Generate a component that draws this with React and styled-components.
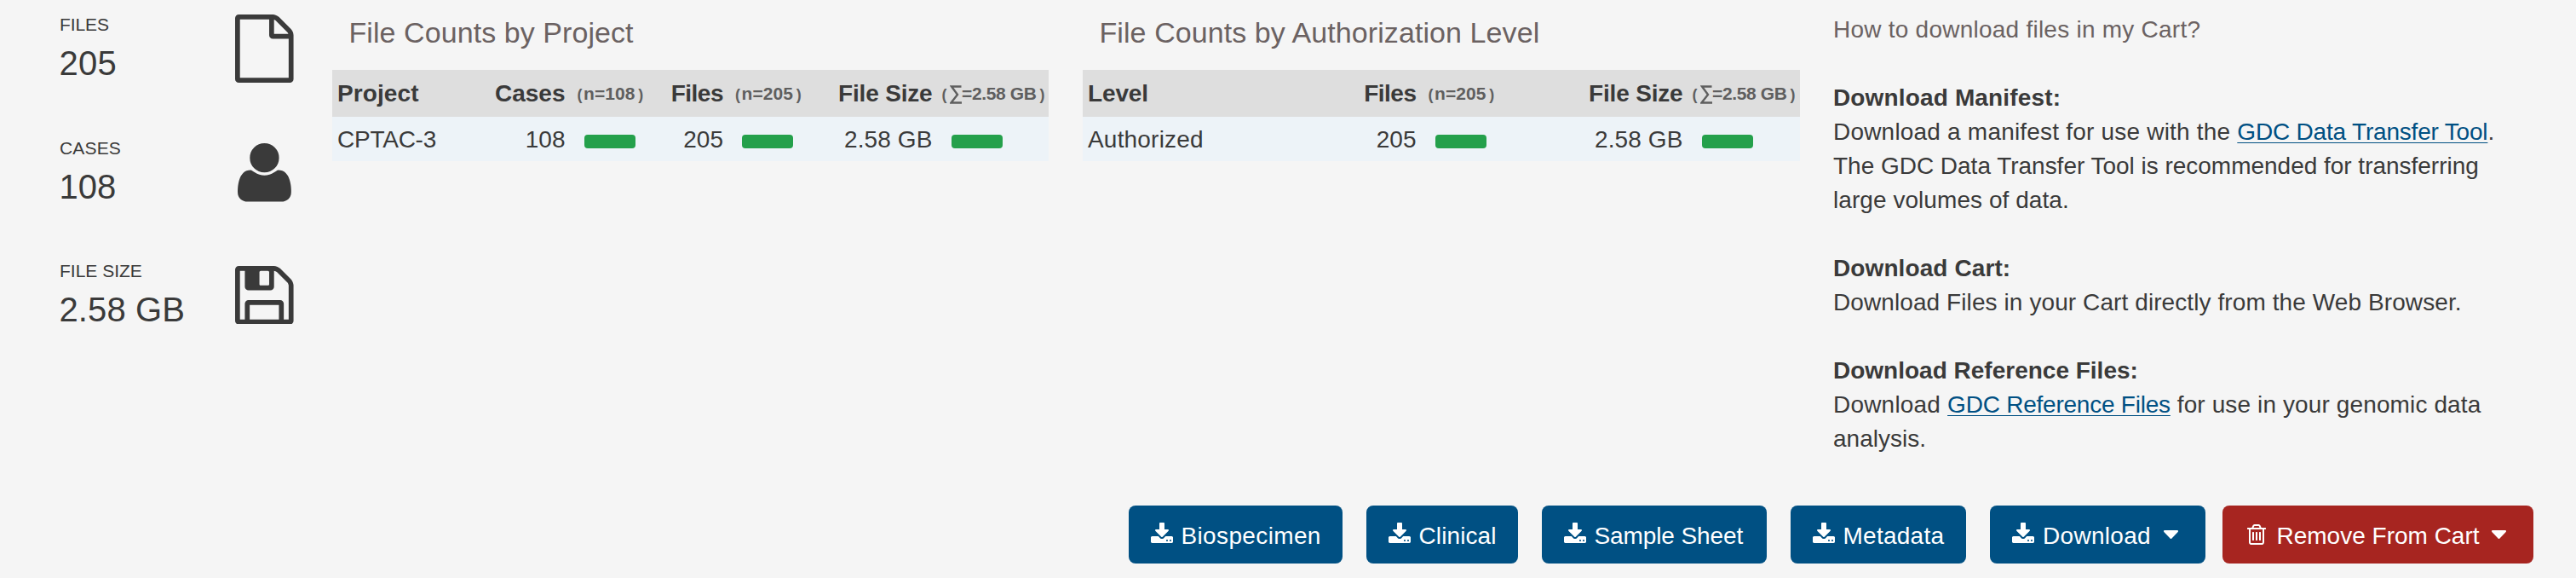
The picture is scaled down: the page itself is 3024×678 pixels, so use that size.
import React from 'react';
import styled, { createGlobalStyle } from 'styled-components';

const GlobalStyle = createGlobalStyle`
  * { box-sizing: border-box; }
  body {
    margin: 0;
    background: #f5f5f5;
    color: #3a3a3a;
    font-family: "Liberation Sans", Arial, sans-serif;
    font-size: 28px;
    line-height: 40px;
  }
`;

const Page = styled.main`
  display: flex;
  flex-direction: column;
  justify-content: space-between;
  height: 678px;
  overflow: hidden;
  background: #f5f5f5;
`;

const Summary = styled.section`
  display: flex;
  align-items: flex-start;
`;

const Text = styled.span`
  letter-spacing: ${(p) => p.$ls || 0}px;
  white-space: nowrap;
`;

/* ---- totals ---- */
const Stats = styled.div`
  display: flex;
  flex-direction: column;
  width: 390px;
  padding: 14px 45px 0 69.5px;
`;

const Stat = styled.div`
  display: flex;
  justify-content: space-between;
  height: 144.5px;
`;

const StatLabel = styled.div`
  font-size: 21px;
  line-height: 30px;
  padding-left: 0.5px;
`;

const StatValue = styled.div`
  font-size: 40px;
  line-height: 60px;
`;

const StatIcon = styled.svg`
  display: block;
  fill: currentColor;
  width: ${(p) => p.$w}px;
  height: ${(p) => p.$h}px;
  margin: ${(p) => p.$top}px ${(p) => p.$right || 0}px 0 0;
`;

/* ---- tables ---- */
const Panel = styled.div`
  width: ${(p) => p.$w}px;
  margin-right: ${(p) => p.$gap}px;
`;

const PanelTitle = styled.h2`
  margin: 0;
  height: 82px;
  padding: 12.5px 0 0 19.5px;
  font-size: 34px;
  font-weight: 400;
  line-height: 50px;
  color: #6b6262;
`;

const Row = styled.div`
  display: grid;
  grid-template-columns: ${(p) => p.$cols};
  align-items: center;
  height: ${(p) => (p.$head ? 55 : 52)}px;
  background: ${(p) => (p.$head ? '#dedede' : '#edf3f8')};
  font-weight: ${(p) => (p.$head ? 700 : 400)};
  padding-top: ${(p) => (p.$head ? 0 : 1)}px;
`;

const NameCell = styled.div`
  padding-left: 6px;
  white-space: nowrap;
`;

const NumberCell = styled.div`
  text-align: right;
  white-space: nowrap;
  padding-right: ${(p) => p.$pr ?? 1}px;
`;

const BarCell = styled.div`
  padding: 4px 0 0 21px;
`;

const Bar = styled.div`
  width: 60px;
  height: 16px;
  border-radius: 4px;
  background: #24a04b;
`;

const Hint = styled.div`
  display: flex;
  align-items: center;
  padding: 1px 0 0 ${(p) => p.$left}px;
  font-size: 21px;
  color: #5f5f5f;
  white-space: nowrap;
`;

const Paren = styled.span`
  font-size: 18px;
  padding-top: 2px;
`;

const Inner = styled.span`
  margin: 0 ${(p) => p.$mr}px 0 ${(p) => p.$ml}px;
  letter-spacing: ${(p) => p.$ls}px;
`;

const SigmaIcon = styled.svg`
  width: 14px;
  height: 22px;
  margin: 1px 0 0 3px;
  fill: none;
  stroke: currentColor;
  stroke-width: 2.4;
`;

/* ---- help ---- */
const Help = styled.div`
  padding-top: 14.5px;
  white-space: nowrap;
`;

const HelpTitle = styled.div`
  color: #6b6262;
`;

const HelpBlock = styled.div`
  margin-top: 40px;
`;

const HelpHeading = styled.div`
  font-weight: 700;
`;

const Link = styled.a`
  color: #005083;
  letter-spacing: ${(p) => p.$ls || 0}px;
  text-decoration: underline;
  text-decoration-thickness: 1px;
  text-underline-offset: 3px;
  text-decoration-skip-ink: none;
`;

/* ---- actions ---- */
const Actions = styled.div`
  display: flex;
  justify-content: flex-end;
  padding: 0 50px 17px 0;
`;

const Button = styled.button`
  display: flex;
  align-items: center;
  width: ${(p) => p.$w}px;
  height: 68px;
  margin-left: ${(p) => p.$gap ?? 28}px;
  padding: 0 0 0 ${(p) => p.$pad || 26}px;
  border: 0;
  border-radius: 8px;
  background: ${(p) => (p.$danger ? '#a72520' : '#005083')};
  color: #fff;
  font: inherit;
`;

const ButtonIcon = styled.svg`
  width: ${(p) => p.$w}px;
  height: 24px;
  margin: 0 ${(p) => p.$gap}px ${(p) => p.$lift || 0}px 0;
  fill: currentColor;
`;

const ButtonText = styled(Text)`
  line-height: 40px;
  padding-top: 3px;
`;

const CaretIcon = styled.svg`
  width: 17px;
  height: 10px;
  margin-left: ${(p) => p.$left}px;
  fill: currentColor;
`;

const FileGlyph = () => (
  <StatIcon $w={68.57} $h={80} $top={3} viewBox="0 0 1536 1792">
    <path d="M1468 380q28 28 48 76t20 88v1152q0 40-28 68t-68 28h-1344q-40 0-68-28t-28-68v-1600q0-40 28-68t68-28h896q40 0 88 20t76 48zm-444-244v376h376q-10-29-22-41l-313-313q-12-12-41-22zm384 1528v-1024h-416q-40 0-68-28t-28-68v-416h-768v1536h1280z" />
  </StatIcon>
);

const UserGlyph = () => (
  <StatIcon $w={62.86} $h={68.57} $top={9.5} $right={3} viewBox="0 0 1408 1536">
    <g transform="translate(0 1408) scale(1 -1)">
      <path d="M1408 131q0-120-73-189.5t-194-69.5h-874q-121 0-194 69.5t-73 189.5q0 53 3.5 103.5t14 109t26.5 108.5t43 97.5t62 81t85.5 53.5t111.5 20q9 0 42-21.5t74.5-48t108-48t133.5-21.5t133.5 21.5t108 48t74.5 48t42 21.5q61 0 111.5-20t85.5-53.5t62-81t43-97.5t26.5-108.5t14-109t3.5-103.5zM1088 1024q0-159-112.5-271.5t-271.5-112.5-271.5 112.5-112.5 271.5 112.5 271.5 271.5 112.5 271.5-112.5 112.5-271.5z" />
    </g>
  </StatIcon>
);

const DiskGlyph = () => (
  <StatIcon $w={68.57} $h={68.57} $top={8.7} viewBox="0 256 1536 1536">
    <path d="M384 1664h768v-384h-768v384zm896 0h128v-896q0-14-10-38.5t-20-34.5l-281-281q-10-10-34-20t-39-10v416q0 40-28 68t-68 28h-576q-40 0-68-28t-28-68v-416h-128v1280h128v-416q0-40 28-68t68-28h832q40 0 68 28t28 68v416zm-384-928v-320q0-13-9.5-22.5t-22.5-9.5h-192q-13 0-22.5 9.5t-9.5 22.5v320q0 13 9.5 22.5t22.5 9.5h192q13 0 22.5-9.5t9.5-22.5zm640 32v928q0 40-28 68t-68 28h-1344q-40 0-68-28t-28-68v-1344q0-40 28-68t68-28h928q40 0 88 20t76 48l280 280q28 28 48 76t20 88z" />
  </StatIcon>
);

const DownloadGlyph = ({ gap = 9 }) => (
  <ButtonIcon $w={26} $gap={gap} $lift={4} viewBox="64 0 1664 1536">
    <path d="M1344 1344q0-26-19-45t-45-19-45 19-19 45 19 45 45 19 45-19 19-45zm256 0q0-26-19-45t-45-19-45 19-19 45 19 45 45 19 45-19 19-45zm128-224v320q0 40-28 68t-68 28h-1472q-40 0-68-28t-28-68v-320q0-40 28-68t68-28h465l135 136q58 56 136 56t136-56l136-136h464q40 0 68 28t28 68zm-325-569q17 41-14 70l-448 448q-18 19-45 19t-45-19l-448-448q-31-29-14-70 17-39 59-39h256v-448q0-26 19-45t45-19h256q26 0 45 19t19 45v448h256q42 0 59 39z" />
  </ButtonIcon>
);

const TrashGlyph = () => (
  <ButtonIcon $w={22} $gap={12.5} viewBox="192 128 1408 1536">
    <path d="M704 736v576q0 14-9 23t-23 9h-64q-14 0-23-9t-9-23v-576q0-14 9-23t23-9h64q14 0 23 9t9 23zm256 0v576q0 14-9 23t-23 9h-64q-14 0-23-9t-9-23v-576q0-14 9-23t23-9h64q14 0 23 9t9 23zm256 0v576q0 14-9 23t-23 9h-64q-14 0-23-9t-9-23v-576q0-14 9-23t23-9h64q14 0 23 9t9 23zm128 724v-948h-896v948q0 22 7 40.5t14.5 27 10.5 8.5h832q3 0 10.5-8.5t14.5-27 7-40.5zm-672-1076h448l-48-117q-7-9-17-11h-317q-10 2-17 11zm928 32v64q0 14-9 23t-23 9h-96v948q0 83-47 143.5t-113 60.5h-832q-66 0-113-58.5t-47-141.5v-952h-96q-14 0-23-9t-9-23v-64q0-14 9-23t23-9h309l70-167q15-37 54-63t79-26h320q40 0 79 26t54 63l70 167h309q14 0 23 9t9 23z" />
  </ButtonIcon>
);

const Caret = ({ left }) => (
  <CaretIcon $left={left} viewBox="384 640 1024 576" preserveAspectRatio="none">
    <path d="M1408 704q0 26-19 45l-448 448q-19 19-45 19t-45-19l-448-448q-19-19-19-45t19-45 45-19h896q26 0 45 19t19 45z" />
  </CaretIcon>
);

const CountHint = ({ children }) => (
  <Hint $left={13}>
    <Paren>(</Paren>
    <Inner $ml={1.5} $mr={3.5} $ls={0.1}>{children}</Inner>
    <Paren>)</Paren>
  </Hint>
);

const SizeHint = () => (
  <Hint $left={9.5}>
    <Paren>(</Paren>
    <SigmaIcon viewBox="0 0 14 22">
      <path d="M13.5 1.5H2L9 11L1.5 20.5H14" />
    </SigmaIcon>
    <Inner $ml={0.5} $mr={4} $ls={-0.38}>=2.58 GB</Inner>
    <Paren>)</Paren>
  </Hint>
);

const projectCols = '180px 94.5px 110.5px 75px 110px 136px 1fr';
const levelCols = '250px 142.5px 110.5px 203px 1fr';

export default function App() {
  return (
    <Page>
      <GlobalStyle />
      <Summary>
        <Stats>
          <Stat>
            <div>
              <StatLabel><Text $ls={-0.1}>FILES</Text></StatLabel>
              <StatValue><Text $ls={0.25}>205</Text></StatValue>
            </div>
            <FileGlyph />
          </Stat>
          <Stat>
            <div>
              <StatLabel><Text $ls={0.15}>CASES</Text></StatLabel>
              <StatValue><Text>108</Text></StatValue>
            </div>
            <UserGlyph />
          </Stat>
          <Stat>
            <div>
              <StatLabel><Text>FILE SIZE</Text></StatLabel>
              <StatValue><Text $ls={0.1}>2.58 GB</Text></StatValue>
            </div>
            <DiskGlyph />
          </Stat>
        </Stats>

        <Panel $w={841} $gap={40}>
          <PanelTitle><Text $ls={0.07}>File Counts by Project</Text></PanelTitle>
          <Row $head $cols={projectCols}>
            <NameCell><Text $ls={0.1}>Project</Text></NameCell>
            <NumberCell>Cases</NumberCell>
            <CountHint>n=108</CountHint>
            <NumberCell><Text $ls={-0.5}>Files</Text></NumberCell>
            <CountHint>n=205</CountHint>
            <NumberCell $pr={1.5}><Text $ls={-0.18}>File Size</Text></NumberCell>
            <SizeHint />
          </Row>
          <Row $cols={projectCols}>
            <NameCell><Text $ls={-0.24}>CPTAC-3</Text></NameCell>
            <NumberCell>108</NumberCell>
            <BarCell><Bar /></BarCell>
            <NumberCell>205</NumberCell>
            <BarCell><Bar /></BarCell>
            <NumberCell $pr={1.5}><Text $ls={0.11}>2.58 GB</Text></NumberCell>
            <BarCell><Bar /></BarCell>
          </Row>
        </Panel>

        <Panel $w={842} $gap={39}>
          <PanelTitle><Text $ls={0.08}>File Counts by Authorization Level</Text></PanelTitle>
          <Row $head $cols={levelCols}>
            <NameCell><Text $ls={-0.13}>Level</Text></NameCell>
            <NumberCell><Text $ls={-0.5}>Files</Text></NumberCell>
            <CountHint>n=205</CountHint>
            <NumberCell $pr={1.5}><Text $ls={-0.18}>File Size</Text></NumberCell>
            <SizeHint />
          </Row>
          <Row $cols={levelCols}>
            <NameCell><Text $ls={0.19}>Authorized</Text></NameCell>
            <NumberCell>205</NumberCell>
            <BarCell><Bar /></BarCell>
            <NumberCell $pr={1.5}><Text $ls={0.11}>2.58 GB</Text></NumberCell>
            <BarCell><Bar /></BarCell>
          </Row>
        </Panel>

        <Help>
          <HelpTitle><Text $ls={0.24}>How to download files in my Cart?</Text></HelpTitle>
          <HelpBlock>
            <HelpHeading><Text $ls={0.15}>Download Manifest:</Text></HelpHeading>
            <div>
              <Text $ls={0.2}>Download a manifest for use with the </Text>
              <Link $ls={-0.19}>GDC Data Transfer Tool</Link>.
            </div>
            <div><Text $ls={-0.02}>The GDC Data Transfer Tool is recommended for transferring</Text></div>
            <div><Text $ls={0.06}>large volumes of data.</Text></div>
          </HelpBlock>
          <HelpBlock>
            <HelpHeading><Text $ls={0.1}>Download Cart:</Text></HelpHeading>
            <div><Text $ls={0.09}>Download Files in your Cart directly from the Web Browser.</Text></div>
          </HelpBlock>
          <HelpBlock>
            <HelpHeading>Download Reference Files:</HelpHeading>
            <div>
              <Text $ls={0.2}>Download </Text>
              <Link $ls={-0.23}>GDC Reference Files</Link>
              <Text $ls={0.12}> for use in your genomic data</Text>
            </div>
            <div>analysis.</div>
          </HelpBlock>
        </Help>
      </Summary>

      <Actions>
        <Button $w={251}><DownloadGlyph gap={9.5} /><ButtonText $ls={0.36}>Biospecimen</ButtonText></Button>
        <Button $w={178}><DownloadGlyph gap={9.5} /><ButtonText $ls={0.1}>Clinical</ButtonText></Button>
        <Button $w={264}><DownloadGlyph gap={9.5} /><ButtonText $ls={-0.1}>Sample Sheet</ButtonText></Button>
        <Button $w={206}><DownloadGlyph gap={9.5} /><ButtonText $ls={0.25}>Metadata</ButtonText></Button>
        <Button $w={253}>
          <DownloadGlyph gap={10} /><ButtonText $ls={0.3}>Download</ButtonText><Caret left={15.5} />
        </Button>
        <Button $w={365} $gap={20} $pad={29} $danger>
          <TrashGlyph /><ButtonText>Remove From Cart</ButtonText><Caret left={14.5} />
        </Button>
      </Actions>
    </Page>
  );
}
